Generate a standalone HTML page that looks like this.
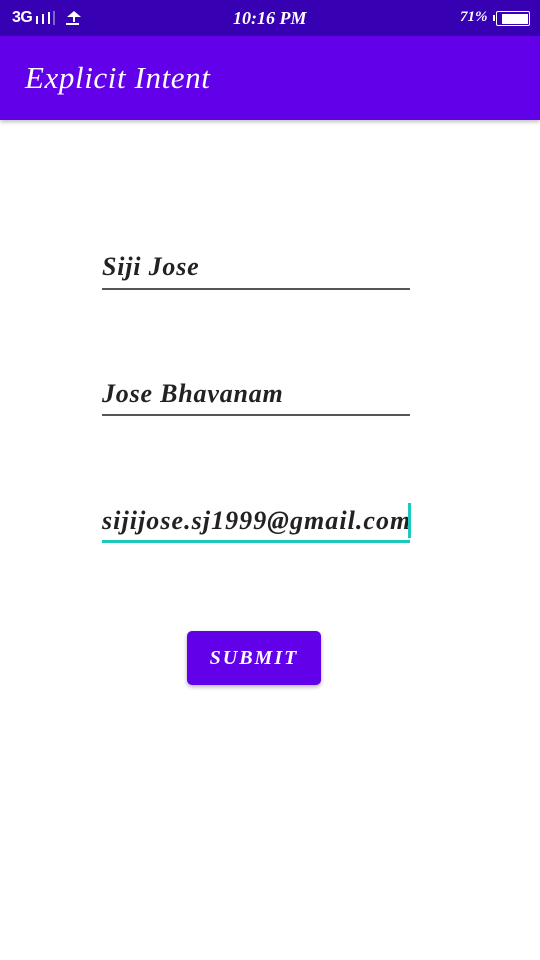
<!DOCTYPE html>
<html><head><style>
body{margin:0;width:540px;height:960px;background:#fff;position:relative;overflow:hidden;font-family:"Liberation Serif",serif;}
.sb{position:absolute;left:0;top:0;width:540px;height:36px;background:#3700b3;color:#fff;}
.ab{position:absolute;left:0;top:36px;width:540px;height:84px;background:#6200ea;box-shadow:0 2px 4px rgba(0,0,0,.25);}
.ab span{position:absolute;left:25px;top:24px;font-size:31px;font-style:italic;color:#fff;letter-spacing:0.6px;}
.f{position:absolute;left:102px;width:330px;font-size:26px;font-style:italic;font-weight:bold;color:#222;letter-spacing:0.8px;white-space:nowrap;}
.l{position:absolute;left:102px;width:308px;height:1.5px;background:#555;}
.btn{position:absolute;left:187px;top:631px;width:134px;height:54px;background:#6200ea;border-radius:5px;box-shadow:0 2px 4px rgba(0,0,0,.3);color:#fff;font-style:italic;font-weight:bold;font-size:20px;letter-spacing:2px;text-align:center;line-height:54px;}
</style></head><body>
<div class="sb">
<span style="position:absolute;left:12px;top:9px;font-family:'Liberation Sans',sans-serif;font-size:16px;font-weight:bold;letter-spacing:-0.5px;">3G</span>
<div style="position:absolute;left:36px;top:16px;width:2px;height:8px;background:#fff"></div>
<div style="position:absolute;left:42px;top:14px;width:2px;height:10px;background:#fff"></div>
<div style="position:absolute;left:48px;top:12px;width:2px;height:12px;background:#fff"></div>
<div style="position:absolute;left:53px;top:11px;width:2px;height:14px;background:#7766cc"></div>
<div style="position:absolute;left:67px;top:11px;width:0;height:0;border-left:7px solid transparent;border-right:7px solid transparent;border-bottom:6px solid #fff"></div>
<div style="position:absolute;left:73px;top:16px;width:2px;height:6px;background:#fff"></div>
<div style="position:absolute;left:66px;top:23px;width:13px;height:2px;background:#fff"></div>
<span style="position:absolute;left:233px;top:8px;font-size:18px;font-style:italic;font-weight:bold;">10:16 PM</span>
<span style="position:absolute;left:460px;top:9px;font-size:15px;font-style:italic;font-weight:bold;">71%</span>
<div style="position:absolute;left:493px;top:15px;width:2px;height:6px;background:#fff"></div>
<div style="position:absolute;left:496px;top:11px;width:32px;height:13px;border:1.5px solid #fff;border-radius:2px;"></div>
<div style="position:absolute;left:502px;top:14px;width:26px;height:10px;background:#fff"></div>
</div>
<div class="ab"><span>Explicit Intent</span></div>
<div class="f" style="top:252px">Siji Jose</div><div class="l" style="top:288px"></div>
<div class="f" style="top:379px">Jose Bhavanam</div><div class="l" style="top:414px"></div>
<div class="f" style="top:506px;letter-spacing:1.05px">sijijose.sj1999@gmail.com</div>
<div style="position:absolute;left:408px;top:503px;width:3px;height:35px;background:#1cc7be"></div>
<div class="l" style="top:540px;height:3px;background:#1cc7be"></div>
<div class="btn">SUBMIT</div>
</body></html>
